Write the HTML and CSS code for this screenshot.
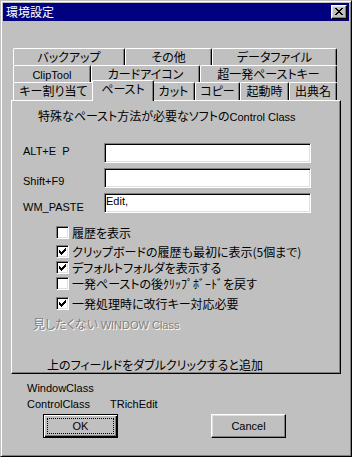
FILE: index.html
```html
<!DOCTYPE html>
<html lang="ja">
<head>
<meta charset="utf-8">
<title>環境設定</title>
<link rel="stylesheet" href="styles.css">
</head>
<body>
<div class="window">
  <div class="titlebar">
    <span class="title">環境設定</span>
    <button class="close" type="button" aria-label="閉じる">
      <svg width="8" height="7" viewBox="0 0 8 7" shape-rendering="crispEdges"><path d="M0 0h2v1H0zM6 0h2v1H6zM1 1h2v1H1zM5 1h2v1H5zM2 2h4v1H2zM3 3h2v1H3zM2 4h4v1H2zM1 5h2v1H1zM5 5h2v1H5zM0 6h2v1H0zM6 6h2v1H6z" fill="#000"/></svg>
    </button>
  </div>
  <div class="dialog">
    <div class="tabs">
      <div class="row">
        <div class="tab w-backup">バックアップ</div>
        <div class="tab w-other">その他</div>
        <div class="tab w-data">データファイル</div>
      </div>
      <div class="row">
        <div class="tab w-clip"><span class="en">ClipTool</span></div>
        <div class="tab w-card">カードアイコン</div>
        <div class="tab w-super">超一発ペーストキー</div>
      </div>
      <div class="row front">
        <div class="tab w-key">キー割り当て</div>
        <div class="tab sel">ペースト</div>
        <div class="tab w-cut">カット</div>
        <div class="tab w-copy">コピー</div>
        <div class="tab w-start">起動時</div>
        <div class="tab w-src">出典名</div>
      </div>
    </div>
    <div class="panel">
      <div class="heading">特殊なペースト方法が必要なソフトの<span class="en">Control Class</span></div>
      <div class="fields">
        <label class="lbl l1 en">ALT+E&nbsp;&nbsp;P</label>
        <div class="field"></div>
        <label class="lbl l2 en">Shift+F9</label>
        <div class="field"></div>
        <label class="lbl l3 en">WM_PASTE</label>
        <div class="field en">Edit,</div>
      </div>
      <div class="checks">
        <div class="check"><span class="cb"></span><span>履歴を表示</span></div>
        <div class="check c2"><span class="cb"><svg width="7" height="7" viewBox="0 0 7 7" shape-rendering="crispEdges"><path d="M0 2h1v3H0zM1 3h1v3H1zM2 4h1v3H2zM3 3h1v3H3zM4 2h1v3H4zM5 1h1v3H5zM6 0h1v3H6z" fill="#000"/></svg></span><span>クリップボードの履歴も最初に表示(5個まで)</span></div>
        <div class="check"><span class="cb"><svg width="7" height="7" viewBox="0 0 7 7" shape-rendering="crispEdges"><path d="M0 2h1v3H0zM1 3h1v3H1zM2 4h1v3H2zM3 3h1v3H3zM4 2h1v3H4zM5 1h1v3H5zM6 0h1v3H6z" fill="#000"/></svg></span><span>デフォルトフォルダを表示する</span></div>
        <div class="check"><span class="cb"></span><span>一発ペーストの後ｸﾘｯﾌﾟﾎﾞｰﾄﾞを戻す</span></div>
        <div class="check c5"><span class="cb"><svg width="7" height="7" viewBox="0 0 7 7" shape-rendering="crispEdges"><path d="M0 2h1v3H0zM1 3h1v3H1zM2 4h1v3H2zM3 3h1v3H3zM4 2h1v3H4zM5 1h1v3H5zM6 0h1v3H6z" fill="#000"/></svg></span><span>一発処理時に改行キー対応必要</span></div>
      </div>
      <div class="disabled">見したくない <span class="en">WINDOW Class</span></div>
      <div class="hint">上のフィールドをダブルクリックすると追加</div>
    </div>
    <div class="info en">
      <span>WindowClass</span><span></span>
      <span>ControlClass</span><span>TRichEdit</span>
    </div>
    <div class="buttons en">
      <button class="btn default" type="button"><span class="focus">OK</span></button>
      <button class="btn" type="button">Cancel</button>
    </div>
  </div>
</div>
</body>
</html>
```
FILE: styles.css
```css
* { box-sizing: border-box; }
html, body { margin: 0; padding: 0; }
body {
  width: 352px;
  height: 457px;
  background: #c0c0c0;
  font-family: "Noto Sans CJK JP", "Noto Sans", sans-serif;
  font-size: 12px;
  font-feature-settings: "palt";
  color: #000;
}
.en {
  font-family: "Liberation Sans", Arial, sans-serif;
  font-size: 11px;
  font-feature-settings: normal;
}
.window {
  width: 352px;
  height: 457px;
  border: 1px solid;
  border-color: #c0c0c0 #000 #000 #c0c0c0;
  box-shadow: inset 1px 1px #fff, inset -1px -1px #808080;
  padding: 2px;
  background: #c0c0c0;
  display: flex;
  flex-direction: column;
}
.titlebar {
  height: 18px;
  flex: none;
  background: #000080;
  display: flex;
  align-items: center;
  justify-content: space-between;
  padding: 0 2px 0 3px;
}
.title { color: #fff; line-height: 14px; font-feature-settings: normal; }
.close {
  width: 16px;
  height: 14px;
  border: 1px solid;
  border-color: #fff #000 #000 #fff;
  box-shadow: inset -1px -1px #808080, inset 1px 1px #dfdfdf;
  background: #c0c0c0;
  padding: 2px 0 0 3px;
  display: flex;
  align-items: flex-start;
  justify-content: flex-start;
}
.close svg { display: block; }
.dialog { padding: 27px 0 0 8px; }
.tabs { margin-left: 2px; width: 324px; }
.row { display: flex; height: 17px; }
.row.front { height: 18px; }
.tab {
  flex: none;
  border-top: 1px solid #fff;
  border-left: 1px solid #fff;
  border-right: 1px solid #000;
  box-shadow: inset -1px 0 #808080;
  border-top-left-radius: 2px;
  border-top-right-radius: 2px;
  text-align: center;
  line-height: 15px;
  white-space: nowrap;
  background: #c0c0c0;
}
.w-backup { width: 112px; }
.w-other { width: 87px; }
.w-data { width: 125px; }
.w-clip { width: 78px; }
.w-card { width: 109px; }
.w-super { width: 137px; }
.w-key { width: 81px; }
.w-cut { width: 43px; }
.w-copy { width: 45px; }
.w-start { width: 49px; }
.w-src { width: 48px; }
.tab.sel {
  width: 62px;
  height: 21px;
  margin: -2px -2px -1px;
  z-index: 1;
  line-height: 13px;
  padding-top: 1px;
}
.panel {
  width: 330px;
  height: 274px;
  border: 1px solid;
  border-color: #fff #000 #000 #fff;
  box-shadow: inset -1px -1px #808080;
  display: flex;
  flex-direction: column;
  align-items: flex-start;
}
.heading { margin: 7px 0 0 26px; line-height: 16px; white-space: nowrap; }
.fields {
  margin: 18px 0 0 11px;
  display: grid;
  grid-template-columns: 81px 207px;
  grid-auto-rows: 20px;
  row-gap: 5px;
}
.lbl { line-height: 12px; align-self: start; white-space: nowrap; }
.l1 { padding-top: 2px; }
.l2 { padding-top: 7px; }
.l3 { padding-top: 8px; }
.field {
  width: 207px;
  height: 20px;
  background: #fff;
  border: 1px solid;
  border-color: #808080 #fff #fff #808080;
  box-shadow: inset 1px 1px #000, inset -1px -1px #dfdfdf;
  padding: 1px 1px 0;
  line-height: 12px;
  overflow: hidden;
}
.checks { margin: 11px 0 0 44px; display: flex; flex-direction: column; }
.check { display: flex; align-items: center; gap: 3px; height: 16px; white-space: nowrap; }
.c2 { margin-top: 3px; }
.c5 { margin-top: 4px; }
.cb {
  flex: none;
  width: 13px;
  height: 13px;
  background: #fff;
  border: 1px solid;
  border-color: #808080 #fff #fff #808080;
  box-shadow: inset 1px 1px #000, inset -1px -1px #dfdfdf;
  padding: 2px 0 0 2px;
}
.cb svg { display: block; }
.disabled {
  margin: 5px 0 0 21px;
  line-height: 16px;
  color: #808080;
  text-shadow: 1px 1px #fff;
  white-space: nowrap;
}
.hint { margin: 24px 0 0 35px; line-height: 16px; white-space: nowrap; }
.info {
  margin: 6px 0 0 16px;
  display: grid;
  grid-template-columns: 83px auto;
  grid-auto-rows: 16px;
  line-height: 16px;
}
.buttons { margin: 2px 0 0 32px; display: flex; gap: 93px; }
.btn {
  width: 75px;
  height: 24px;
  border: 1px solid;
  border-color: #fff #000 #000 #fff;
  box-shadow: inset -1px -1px #808080, inset 1px 1px #dfdfdf;
  background: #c0c0c0;
  font: inherit;
  color: #000;
  display: flex;
  align-items: center;
  justify-content: center;
  padding: 0;
}
.btn.default {
  border-color: #000;
  box-shadow: inset 1px 1px #fff, inset -1px -1px #000, inset -2px -2px #808080;
  padding: 3px;
  align-items: stretch;
}
.focus {
  flex: 1;
  border: 1px dotted #000;
  display: flex;
  align-items: center;
  justify-content: center;
}
```
